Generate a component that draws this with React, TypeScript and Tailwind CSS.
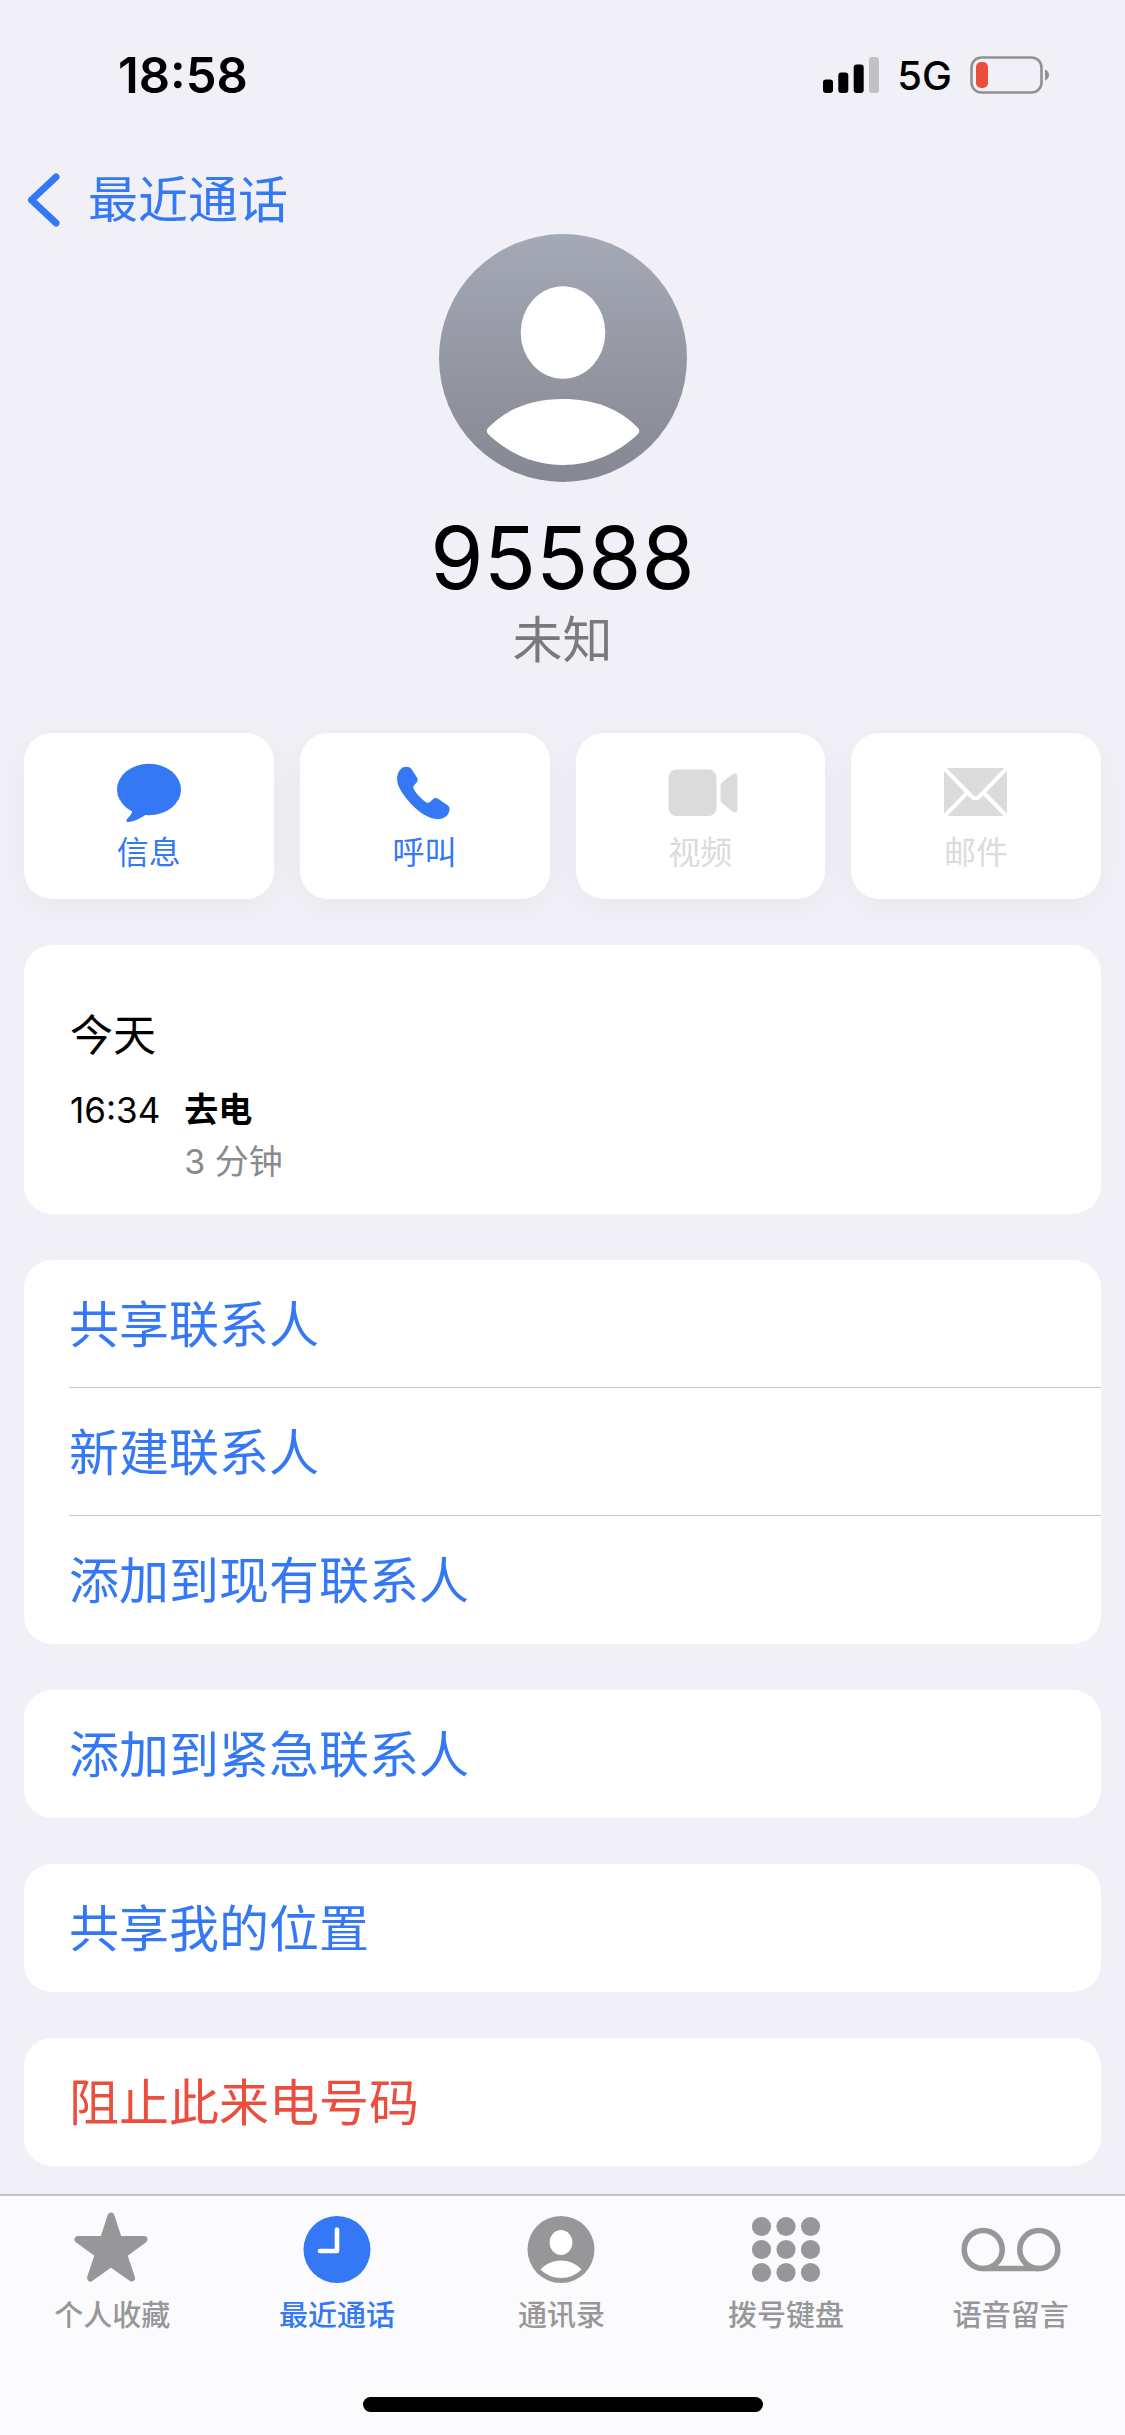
import React from 'react';

interface Action {
  label: string;
  icon: React.ReactNode;
  disabled?: boolean;
}

interface Tab {
  label: string;
  icon: React.ReactNode;
  active?: boolean;
}

interface Row {
  label: string;
  danger?: boolean;
}

const MessageIcon = () => (
  <svg width="65" height="60" viewBox="-1 0 65 60" fill="currentColor" aria-hidden="true">
    <ellipse cx="32" cy="26.5" rx="32" ry="25.7" />
    <path d="M15.5 44C16.5 49 13 53 10 56C8.5 58 9.5 59.5 12 59C18 58 24 55 30 51Z" />
  </svg>
);

const PhoneIcon = () => (
  <svg width="60" height="60" viewBox="0 -2 60 60" fill="currentColor" aria-hidden="true">
    <path d="M2.1 14.3C2.1 6.5 6 1.7 11.5 1.7C14 1.7 15.6 2.6 16.6 4.3L22 12.6C23 14.3 23 15.8 21.8 17.3L19 20.6C18.2 21.7 18.2 23 19 24.4C21.6 28.8 26.5 34 31 37.2C32.6 38.2 34 38 35.2 36.8L37.6 34.4C39.3 32.8 41.6 32.7 43.5 34L52.6 40.2C54.2 41.4 54.8 43 54.5 45C53.5 51 49 54.2 42.8 54.2C34 54.2 24 47.5 16 38.8C8 30 2.1 21.5 2.1 14.3Z" />
  </svg>
);

const VideoIcon = () => (
  <svg width="76" height="60" viewBox="-6 0 76 60" fill="currentColor" aria-hidden="true">
    <rect x="0.5" y="6.5" width="48" height="46.5" rx="8" />
    <path d="M52.5 22.5Q52.5 20.6 54 19.4L64 11.5Q69.5 8.5 69.5 14V45.5Q69.5 51 64 48.2L54 40Q52.5 38.8 52.5 37Z" />
  </svg>
);

const MailIcon = () => (
  <svg width="66" height="60" viewBox="-1 -5 66 60" aria-hidden="true">
    <rect width="63" height="48" rx="4" fill="currentColor" />
    <g fill="none" stroke="#fff" strokeWidth="4">
      <path d="M-1 -1L27 28Q31.5 32.5 36 28L64 -1" />
      <path d="M-1 49.5L23 25M64 49.5L40 25" />
    </g>
  </svg>
);

const StarIcon = () => (
  <svg width="74" height="72" viewBox="1 2 74 72" fill="currentColor" stroke="currentColor" strokeWidth="7" strokeLinejoin="round" overflow="visible" aria-hidden="true">
    <path d="M37 4L44.6 27.5H70L49.6 42.3L57.5 66L37 51.5L16.5 66L24.4 42.3L4 27.5H29.4Z" />
  </svg>
);

const ClockIcon = () => (
  <svg width="72" height="72" viewBox="0 0 72 72" aria-hidden="true">
    <circle cx="36" cy="35.5" r="33.5" fill="currentColor" />
    <path d="M36 15.5V37H19" fill="none" stroke="#fff" strokeWidth="4.6" strokeLinecap="round" strokeLinejoin="round" />
  </svg>
);

const PersonIcon = () => (
  <svg width="72" height="72" viewBox="0 0 72 72" aria-hidden="true">
    <circle cx="36" cy="35.5" r="33.5" fill="currentColor" />
    <ellipse cx="36" cy="28.5" rx="11.4" ry="12.5" fill="#fff" />
    <path d="M15.5 55.5Q24 46.5 36 46.5T56.5 55.5Q48 64 36 64T15.5 55.5Z" fill="#fff" />
  </svg>
);

const KeypadIcon = () => (
  <svg width="72" height="72" viewBox="0 0 72 72" fill="currentColor" aria-hidden="true">
    {[12.5, 35.5, 58.5].map(cy => [11.5, 36, 60.5].map(cx => (
      <circle key={`${cx}-${cy}`} cx={cx} cy={cy} r="9.6" />
    )))}
  </svg>
);

const VoicemailIcon = () => (
  <svg width="100" height="72" viewBox="0 0 100 72" fill="none" stroke="currentColor" strokeWidth="5.6" aria-hidden="true">
    <circle cx="22.2" cy="35.5" r="19" />
    <circle cx="77.8" cy="35.5" r="19" />
    <path d="M22 54.5H78" />
  </svg>
);

const actions: Action[] = [
  { label: '信息', icon: <MessageIcon /> },
  { label: '呼叫', icon: <PhoneIcon /> },
  { label: '视频', icon: <VideoIcon />, disabled: true },
  { label: '邮件', icon: <MailIcon />, disabled: true },
];

const groups: Row[][] = [
  [{ label: '共享联系人' }, { label: '新建联系人' }, { label: '添加到现有联系人' }],
  [{ label: '添加到紧急联系人' }],
  [{ label: '共享我的位置' }],
  [{ label: '阻止此来电号码', danger: true }],
];

const tabs: Tab[] = [
  { label: '个人收藏', icon: <StarIcon /> },
  { label: '最近通话', icon: <ClockIcon />, active: true },
  { label: '通讯录', icon: <PersonIcon /> },
  { label: '拨号键盘', icon: <KeypadIcon /> },
  { label: '语音留言', icon: <VoicemailIcon /> },
];

const StatusBar = () => (
  <div className="flex h-[150px] items-center justify-between pr-[75px] pl-[118px] text-black">
    <span className="pt-0.5 text-[49px] leading-[60px] font-semibold">18:58</span>
    <div className="flex items-center gap-[18px]">
      <svg width="56" height="36" viewBox="0 0 56 36" aria-label="信号">
        <rect x="0" y="22.5" width="10" height="13.5" rx="3" />
        <rect x="15.3" y="15.5" width="10" height="20.5" rx="3" />
        <rect x="30.7" y="7.5" width="10" height="28.5" rx="3" />
        <rect x="46" y="0" width="10" height="36" rx="3" fill="#c2c1c6" />
      </svg>
      <span className="pt-0.5 text-[40px] leading-[60px] font-medium">5G</span>
      <svg width="80" height="38" viewBox="0 0 80 38" aria-label="电池">
        <rect x="1.5" y="1.5" width="70" height="35" rx="10" fill="none" stroke="#919095" strokeWidth="2.6" />
        <rect x="6" y="6" width="12" height="26" rx="5" fill="#eb4e3d" />
        <path d="M75 13.5Q79 15 79 19T75 24.5Z" fill="#919095" />
      </svg>
    </div>
  </div>
);

export default function App() {
  return (
    <div className="flex min-h-screen flex-col bg-[#f1f0f6] font-['Inter','Noto_Sans_CJK_SC',sans-serif]">
      <header>
        <StatusBar />
        <nav className="flex h-[84px] items-center pt-4 pl-[26px]">
          <button type="button" className="flex items-center gap-7 text-[50px] leading-[60px] text-[#3478f6]">
            <svg width="34" height="54" viewBox="0 0 34 54" fill="none" stroke="currentColor" strokeWidth="7" strokeLinecap="round" strokeLinejoin="round" aria-hidden="true">
              <path d="M30 4L5.5 27L30 50" />
            </svg>
            最近通话
          </button>
        </nav>
      </header>

      <main className="flex flex-col px-6 pb-7">
        {/* Contact */}
        <section className="flex flex-col items-center">
          <svg width="248" height="248" viewBox="0 0 248 248" aria-hidden="true">
            <defs>
              <linearGradient id="avatar" x1="0" y1="0" x2="0" y2="1">
                <stop offset="0" stopColor="#a5a9b6" />
                <stop offset="1" stopColor="#858892" />
              </linearGradient>
            </defs>
            <circle cx="124" cy="124" r="124" fill="url(#avatar)" />
            <ellipse cx="124" cy="98.5" rx="42.3" ry="46.3" fill="#fff" />
            <path d="M49 200Q46.5 197 49 194C68 174 94 165 124 165S180 174 199 194Q201.5 197 199 200C178 220 152 231 124 231S70 220 49 200Z" fill="#fff" />
          </svg>
          <h1 className="mt-[26px] text-[86px] leading-[100px] text-black">95588</h1>
          <p className="mt-0.5 text-[50px] leading-[60px] text-[#7a7a7b]">未知</p>
        </section>

        <section className="mt-[63px] grid grid-cols-4 gap-[26px]">
          {actions.map(action => (
            <button
              key={action.label}
              type="button"
              disabled={action.disabled}
              className={`flex h-[166px] flex-col items-center rounded-[28px] bg-white pt-[30px] shadow-[0_8px_36px_rgba(0,0,0,0.04)] ${
                action.disabled ? 'text-[#dbdbdb]' : 'text-[#3478f6]'
              }`}
            >
              {action.icon}
              <span className="mt-2.5 text-[32px] leading-10">{action.label}</span>
            </button>
          ))}
        </section>

        {/* Call log */}
        <section className="mt-[46px] rounded-[28px] bg-white px-[46px] pt-[59px] pb-[26px]">
          <h2 className="text-[43px] leading-[62px] text-black">今天</h2>
          <div className="mt-[18px] flex gap-6 text-[34px] leading-[52px]">
            <time className="text-[35px] text-black">16:34</time>
            <div>
              <p className="font-bold text-black">去电</p>
              <p className="text-[#8a8a8e]">3 分钟</p>
            </div>
          </div>
        </section>

        {groups.map(rows => (
          <section key={rows[0].label} className="mt-[46px] rounded-[28px] bg-white pl-[45px]">
            {rows.map((row, i) => (
              <button
                key={row.label}
                type="button"
                className={`flex h-32 w-full items-center pt-0.5 text-left text-[50px] leading-[60px] ${
                  i < rows.length - 1 ? 'border-b border-[#c6c6c8]' : ''
                } ${row.danger ? 'text-[#eb4e3d]' : 'text-[#3478f6]'}`}
              >
                {row.label}
              </button>
            ))}
          </section>
        ))}
      </main>

      <footer className="mt-auto border-t-2 border-[#c4c3c8] bg-[#fbfbfd] pt-[18px] pb-[23px]">
        <nav className="grid grid-cols-5 pr-0.5">
          {tabs.map(tab => (
            <button
              key={tab.label}
              type="button"
              className={`flex flex-col items-center gap-3 text-[29px] leading-9 font-medium ${
                tab.active ? 'text-[#3478f6]' : 'text-[#979799]'
              }`}
            >
              {tab.icon}
              {tab.label}
            </button>
          ))}
        </nav>
        {/* Home indicator */}
        <div className="mx-auto mt-[63px] h-[15px] w-[400px] rounded-full bg-black" />
      </footer>
    </div>
  );
}
